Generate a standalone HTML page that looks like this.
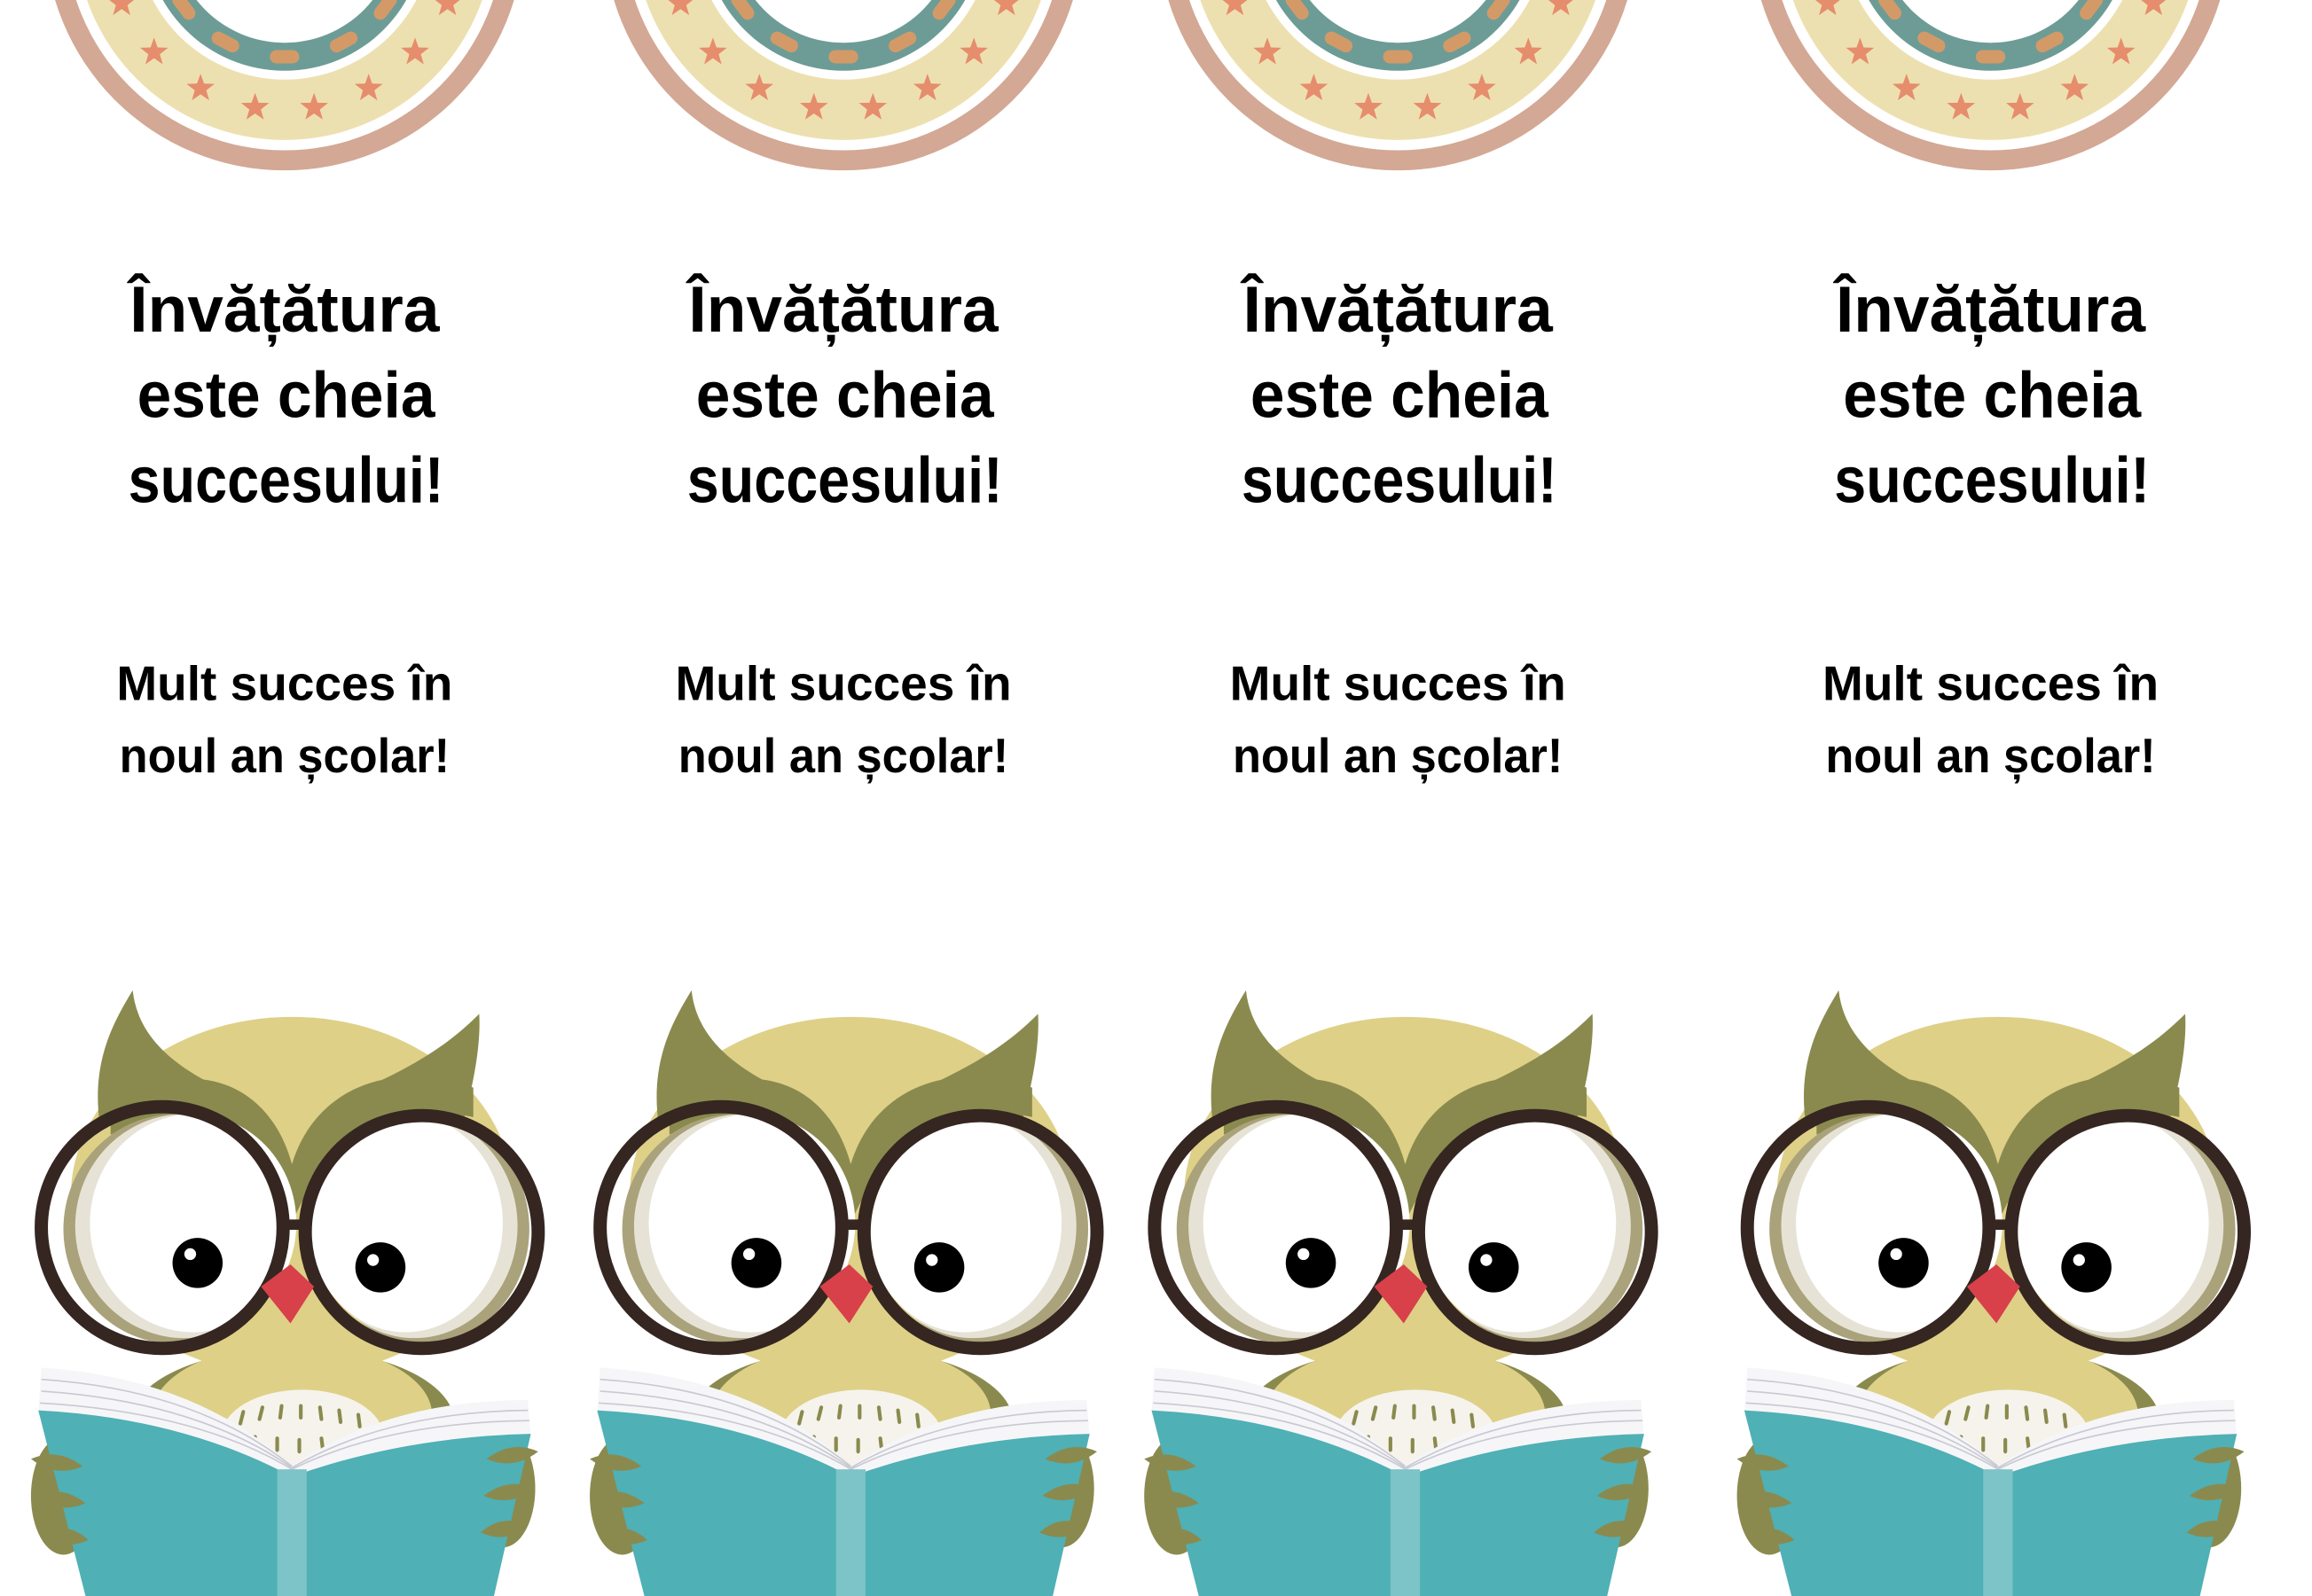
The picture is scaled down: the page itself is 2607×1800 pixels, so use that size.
<!DOCTYPE html>
<html><head><meta charset="utf-8"><style>html,body{margin:0;padding:0;background:#fff;overflow:hidden}svg{display:block}</style></head><body>
<svg width="2607" height="1800" viewBox="0 0 1568 1083" preserveAspectRatio="none" xmlns="http://www.w3.org/2000/svg" xmlns:xlink="http://www.w3.org/1999/xlink">
<defs>
<path id="st" d="M0,-10 L2.4,-3.3 L9.5,-3.1 L3.9,1.3 L5.9,8.1 L0,4 L-5.9,8.1 L-3.9,1.3 L-9.5,-3.1 L-2.4,-3.3Z" fill="#e58d6c"/>
<rect id="ds" x="-10" y="-4.5" width="20" height="9" rx="4.5" fill="#d39a68"/>
<g id="rb">
<circle r="162.6" fill="#d3a895"/><circle r="149" fill="#fff"/><circle r="142" fill="#ede0b0"/>
<circle r="101" fill="#fff"/><circle r="95" fill="#6d9c96"/><circle r="76" fill="#fff"/>
<use xlink:href="#st" x="20" y="120"/><use xlink:href="#st" x="-20" y="120"/>
<use xlink:href="#st" x="57" y="107"/><use xlink:href="#st" x="-57" y="107"/>
<use xlink:href="#st" x="88.5" y="82.5"/><use xlink:href="#st" x="-88.5" y="82.5"/>
<use xlink:href="#st" x="110.5" y="49.2"/><use xlink:href="#st" x="-110.5" y="49.2"/>
<use xlink:href="#st" x="120.5" y="10.5"/><use xlink:href="#st" x="-120.5" y="10.5"/>
<use xlink:href="#ds" x="0" y="85.5"/>
<use xlink:href="#ds" transform="translate(40.1,75.5) rotate(-28)"/><use xlink:href="#ds" transform="translate(-40.1,75.5) rotate(28)"/>
<use xlink:href="#ds" transform="translate(68.3,51.5) rotate(-53)"/><use xlink:href="#ds" transform="translate(-68.3,51.5) rotate(53)"/>
<use xlink:href="#ds" transform="translate(83.6,17.8) rotate(-78)"/><use xlink:href="#ds" transform="translate(-83.6,17.8) rotate(78)"/>
</g>
<g id="owl">
<ellipse cx="148" cy="1010" rx="22" ry="40" fill="#8a8a4e"/>
<ellipse cx="-150" cy="1015" rx="22" ry="40" fill="#8a8a4e"/>
<ellipse cx="5" cy="965" rx="110" ry="50" fill="#8a8a4e"/>
<ellipse cx="5" cy="960" rx="95" ry="48" fill="#ded087"/>
<ellipse cx="5" cy="812" rx="150" ry="122" fill="#ded087"/>
<path d="M-125,765 C-132,720 -115,692 -103,672 C-100,700 -80,722 -40,740 Z" fill="#8a8a4e"/>
<path d="M120,765 C130,730 133,705 132,688 C115,705 95,720 55,738 Z" fill="#8a8a4e"/>
<path d="M-118,748 C-60,715 -10,735 5,790 C20,740 70,718 128,738 L128,758 C80,748 30,770 5,830 C-20,770 -70,748 -118,770 Z" fill="#8a8a4e"/>
<ellipse cx="-74" cy="834" rx="76" ry="78" fill="#aaa27a"/>
<ellipse cx="-68" cy="832" rx="74" ry="76" fill="#e6e3d6"/>
<ellipse cx="-62" cy="830" rx="70" ry="74" fill="#fff"/>
<ellipse cx="94" cy="834" rx="72" ry="78" fill="#aaa27a"/>
<ellipse cx="88" cy="832" rx="70" ry="76" fill="#e6e3d6"/>
<ellipse cx="82" cy="830" rx="66" ry="74" fill="#fff"/>
<circle cx="-59" cy="857" r="17" fill="#000"/><circle cx="-64" cy="851" r="4" fill="#fff"/>
<circle cx="65" cy="860" r="17" fill="#000"/><circle cx="60" cy="855" r="4" fill="#fff"/>
<circle cx="-83" cy="833" r="82" fill="none" stroke="#352621" stroke-width="9"/>
<circle cx="93" cy="836" r="79" fill="none" stroke="#352621" stroke-width="9"/>
<line x1="-3" y1="831" x2="16" y2="831" stroke="#352621" stroke-width="7"/>
<path d="M-16,873 L4,858 L20,873 L4,898 Z" fill="#d8404a"/>
<ellipse cx="12" cy="975" rx="55" ry="32" fill="#f6f3ec"/>
<g stroke="#8a8a4e" stroke-width="2.5" stroke-linecap="round">
<path d="M-28,958 l-2,8 M-15,955 l-2,8 M-2,954 l-1,8 M11,954 l0,8 M24,955 l1,8 M37,957 l1,8 M50,960 l1,8 M-20,975 l-1,8 M-5,976 l0,8 M10,977 l0,8 M25,976 l1,8"/>
</g>
<path d="M-165,928 Q-60,935 5,995 Q70,950 165,950 L167,975 L5,1000 L-167,960 Z" fill="#f6f6f8"/>
<g stroke="#c9c9d3" stroke-width="1" fill="none">
<path d="M-165,936 Q-60,943 5,995 M-165,944 Q-60,951 5,996 M-166,952 Q-60,958 5,997 M165,957 Q70,958 5,996 M166,964 Q70,965 5,997"/>
</g>
<path d="M-167,957 Q-70,962 5,1002 L5,1083 L-135,1083 Z" fill="#4fb0b5"/>
<path d="M5,1002 Q80,975 167,973 L142,1083 L5,1083 Z" fill="#4fb0b5"/>
<path d="M-5,997 L15,997 L15,1083 L-5,1083 Z" fill="#7cc4c7"/>
<path d="M-172,990 q18,-8 35,5 q-18,8 -35,-5 M-170,1015 q18,-8 35,5 q-18,8 -35,-5 M-165,1040 q18,-8 32,5 q-18,8 -32,-5" fill="#8a8a4e"/>
<path d="M172,985 q-18,-8 -35,5 q18,8 35,-5 M170,1010 q-18,-8 -35,5 q18,8 35,-5 M165,1035 q-18,-8 -32,5 q18,8 32,-5" fill="#8a8a4e"/>
</g>
</defs>
<use xlink:href="#rb" x="193" y="-47"/><use xlink:href="#rb" x="572" y="-47"/><use xlink:href="#rb" x="948" y="-47"/><use xlink:href="#rb" x="1350" y="-47"/>
<use xlink:href="#owl" x="193" y="0"/><use xlink:href="#owl" x="572" y="0"/><use xlink:href="#owl" x="948" y="0"/><use xlink:href="#owl" x="1350" y="0"/>
<g font-family="Liberation Sans, sans-serif" font-weight="bold" text-anchor="middle" fill="#000" lengthAdjust="spacingAndGlyphs">
<g font-size="44">
<text x="193" y="225" textLength="210" lengthAdjust="spacingAndGlyphs">Învățătura</text><text x="194" y="283" textLength="202" lengthAdjust="spacingAndGlyphs">este cheia</text><text x="194" y="341" textLength="214" lengthAdjust="spacingAndGlyphs">succesului!</text>
<text x="572" y="225" textLength="210" lengthAdjust="spacingAndGlyphs">Învățătura</text><text x="573" y="283" textLength="202" lengthAdjust="spacingAndGlyphs">este cheia</text><text x="573" y="341" textLength="214" lengthAdjust="spacingAndGlyphs">succesului!</text>
<text x="948" y="225" textLength="210" lengthAdjust="spacingAndGlyphs">Învățătura</text><text x="949" y="283" textLength="202" lengthAdjust="spacingAndGlyphs">este cheia</text><text x="949" y="341" textLength="214" lengthAdjust="spacingAndGlyphs">succesului!</text>
<text x="1350" y="225" textLength="210" lengthAdjust="spacingAndGlyphs">Învățătura</text><text x="1351" y="283" textLength="202" lengthAdjust="spacingAndGlyphs">este cheia</text><text x="1351" y="341" textLength="214" lengthAdjust="spacingAndGlyphs">succesului!</text>
</g>
<g font-size="33">
<text x="193" y="475" textLength="228" lengthAdjust="spacingAndGlyphs">Mult succes în</text><text x="193" y="524" textLength="224" lengthAdjust="spacingAndGlyphs">noul an școlar!</text>
<text x="572" y="475" textLength="228" lengthAdjust="spacingAndGlyphs">Mult succes în</text><text x="572" y="524" textLength="224" lengthAdjust="spacingAndGlyphs">noul an școlar!</text>
<text x="948" y="475" textLength="228" lengthAdjust="spacingAndGlyphs">Mult succes în</text><text x="948" y="524" textLength="224" lengthAdjust="spacingAndGlyphs">noul an școlar!</text>
<text x="1350" y="475" textLength="228" lengthAdjust="spacingAndGlyphs">Mult succes în</text><text x="1350" y="524" textLength="224" lengthAdjust="spacingAndGlyphs">noul an școlar!</text>
</g>
</g>
</svg>
</body></html>
